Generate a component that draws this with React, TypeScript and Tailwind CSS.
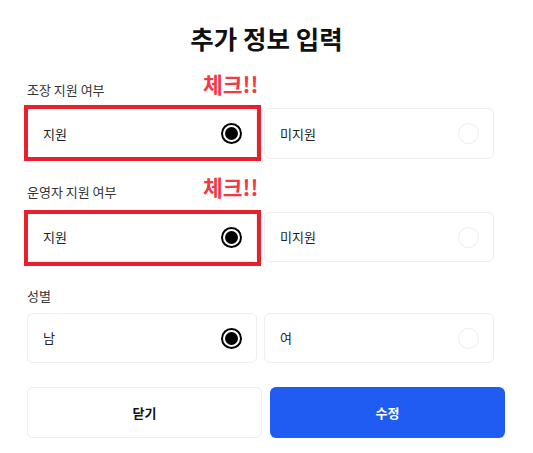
import React from "react";

const FONT = { fontFamily: '"Noto Sans CJK KR", "Noto Sans", sans-serif' };

function Radio({ checked }: { checked: boolean }) {
  if (checked) {
    return (
      <span className="flex h-[21px] w-[21px] items-center justify-center rounded-full border-[2px] border-black bg-white">
        <span className="h-[13px] w-[13px] rounded-full bg-black" />
      </span>
    );
  }
  return <span className="h-[21px] w-[21px] rounded-full border border-[#ececec] bg-white" />;
}

function Option({
  label,
  checked,
  height,
  mark,
}: {
  label: string;
  checked: boolean;
  height: string;
  mark?: string;
}) {
  return (
    <div className={`relative flex w-[230px] items-center justify-between rounded-[6px] border border-[#eeeeee] bg-white pl-[15px] pr-[14px] ${height}`}>
      <span className="text-[13px] text-[#222]">{label}</span>
      <Radio checked={checked} />
      {mark === "a" && (
        <span className="pointer-events-none absolute -left-[4px] -right-[5px] -top-[4px] -bottom-[3px] border-[4px] border-[#e8202a]" />
      )}
      {mark === "b" && (
        <span className="pointer-events-none absolute -left-[4px] -right-[5px] -top-[3px] -bottom-[5px] border-[4px] border-[#e8202a]" />
      )}
    </div>
  );
}

export default function App() {
  return (
    <div className="min-h-[453px] w-[533px] bg-white" style={FONT}>
      <div className="px-[27px] pt-[22px]">
        <h1 className="text-center text-[25.5px] font-bold leading-[32px] text-[#111]">추가 정보 입력</h1>

        <div className="relative mt-[26px]">
          <div className="text-[13px] leading-[20px] text-[#333]">조장 지원 여부</div>
          <span className="absolute left-[176px] top-[-10px] text-[21.5px] font-bold leading-[28px] text-[#f03a46]">체크!!</span>
          <div className="mt-[8px] flex gap-[7px]">
            <Option label="지원" checked height="h-[51px]" mark="a" />
            <Option label="미지원" checked={false} height="h-[51px]" />
          </div>
        </div>

        <div className="relative mt-[23px]">
          <div className="text-[13px] leading-[20px] text-[#333]">운영자 지원 여부</div>
          <span className="absolute left-[176px] top-[-9px] text-[21.5px] font-bold leading-[28px] text-[#f03a46]">체크!!</span>
          <div className="mt-[10px] flex gap-[7px]">
            <Option label="지원" checked height="h-[50px]" mark="b" />
            <Option label="미지원" checked={false} height="h-[50px]" />
          </div>
        </div>

        <div className="mt-[24px]">
          <div className="text-[13px] leading-[20px] text-[#333]">성별</div>
          <div className="mt-[7px] flex gap-[7px]">
            <Option label="남" checked height="h-[50px]" />
            <Option label="여" checked={false} height="h-[50px]" />
          </div>
        </div>

        <div className="mt-[24px] flex gap-[8px]">
          <button className="flex h-[51px] w-[235px] items-center justify-center rounded-[6px] border border-[#eeeeee] bg-white text-[13px] font-bold text-[#111]">
            닫기
          </button>
          <button className="flex h-[51px] w-[235px] items-center justify-center rounded-[6px] bg-[#215cf2] text-[13px] font-bold text-white">
            수정
          </button>
        </div>
      </div>
    </div>
  );
}
